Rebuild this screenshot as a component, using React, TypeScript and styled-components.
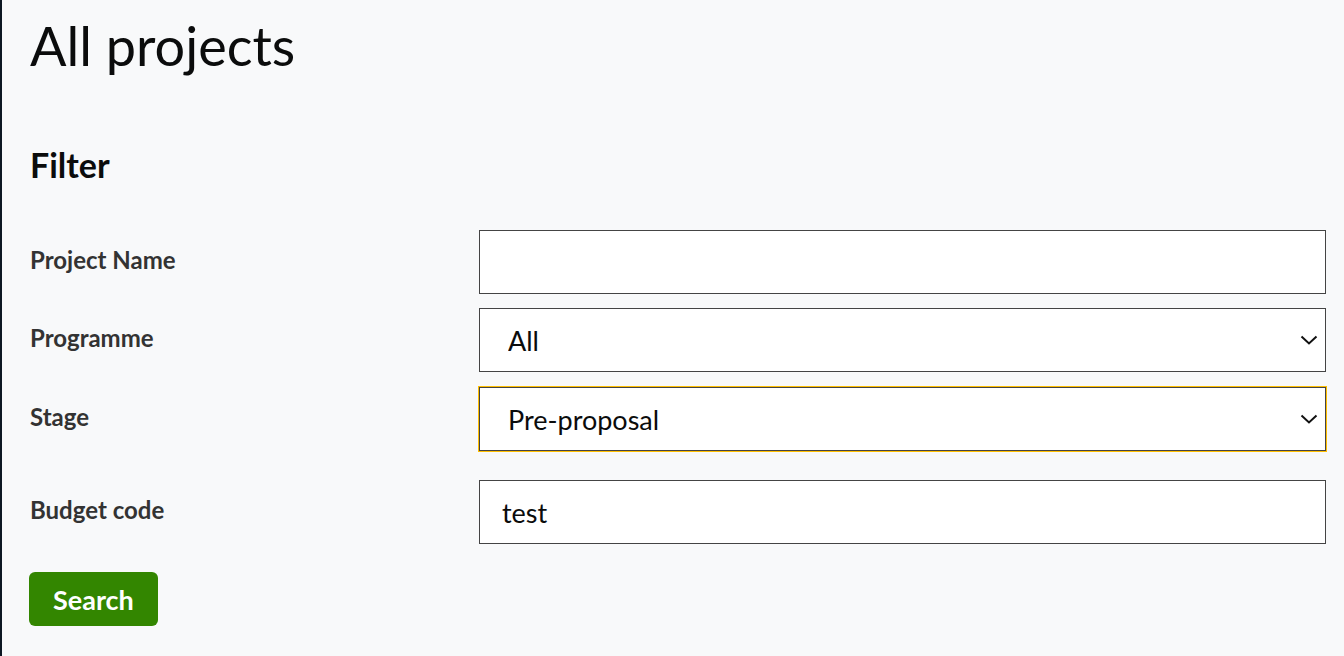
import React, { useState } from "react";
import styled, { createGlobalStyle } from "styled-components";

const GlobalStyle = createGlobalStyle`
  html, body {
    margin: 0;
    padding: 0;
    background: #f8f9fa;
  }
  body {
    font-family: "Source Sans Pro", Lato, "Noto Sans", sans-serif;
    color: #0b0c0c;
  }
`;

const Page = styled.div`
  min-height: 656px;
  box-sizing: border-box;
  border-left: 2px solid #0d1722;
  padding: 0 18px 0 28px;
`;

const Title = styled.h1`
  margin: 0;
  padding-top: 13px;
  font-size: 54px;
  font-weight: 400;
  line-height: 66px;
  color: #0b0c0c;
`;

const SubTitle = styled.h2`
  margin: 66px 0 0;
  font-size: 34px;
  font-weight: 700;
  line-height: 40px;
  color: #0b0c0c;
`;

const Form = styled.form`
  margin-top: 45px;
  display: flex;
  flex-direction: column;
`;

const Row = styled.div<{ $gapTop?: number }>`
  display: grid;
  grid-template-columns: 449px 1fr;
  align-items: center;
  margin-top: ${(p) => p.$gapTop ?? 0}px;
`;

const Label = styled.label`
  font-size: 24px;
  font-weight: 700;
  color: #333;
  padding-bottom: 6px;
`;

const fieldBase = `
  box-sizing: border-box;
  width: 100%;
  height: 64px;
  border: 1px solid #444;
  background: #fff;
  font-family: inherit;
  font-size: 27px;
  color: #0b0c0c;
  border-radius: 0;
  outline: none;
`;

const TextInput = styled.input`
  ${fieldBase}
  padding: 0 22px;
`;

const SelectWrap = styled.div`
  position: relative;
`;

const Select = styled.select<{ $focused?: boolean }>`
  ${fieldBase}
  appearance: none;
  -webkit-appearance: none;
  padding: 0 50px 0 28px;
  box-shadow: ${(p) => (p.$focused ? "0 0 0 1px #ffbf00" : "none")};
`;

const Chevron = styled.svg`
  position: absolute;
  right: 8px;
  top: 50%;
  transform: translateY(-50%);
  pointer-events: none;
`;

const SearchButton = styled.button`
  align-self: flex-start;
  margin-top: 28px;
  margin-left: -1px;
  height: 54px;
  padding: 0 24px;
  background: #338600;
  color: #fff;
  border: none;
  border-radius: 6px;
  font-family: inherit;
  font-size: 27px;
  font-weight: 700;
  cursor: pointer;
`;

const ChevronIcon = () => (
  <Chevron width="18" height="12" viewBox="0 0 18 12">
    <path d="M1.5 2.5 L9 9.5 L16.5 2.5" fill="none" stroke="#111" strokeWidth="2" />
  </Chevron>
);

const App = () => {
  const [name, setName] = useState("");
  const [programme, setProgramme] = useState("All");
  const [stage, setStage] = useState("Pre-proposal");
  const [budget, setBudget] = useState("test");

  return (
    <Page>
      <GlobalStyle />
      <Title>All projects</Title>
      <SubTitle>Filter</SubTitle>
      <Form onSubmit={(e) => e.preventDefault()}>
        <Row>
          <Label htmlFor="name">Project Name</Label>
          <TextInput id="name" value={name} onChange={(e) => setName(e.target.value)} />
        </Row>
        <Row $gapTop={14}>
          <Label htmlFor="programme">Programme</Label>
          <SelectWrap>
            <Select id="programme" value={programme} onChange={(e) => setProgramme(e.target.value)}>
              <option>All</option>
            </Select>
            <ChevronIcon />
          </SelectWrap>
        </Row>
        <Row $gapTop={15}>
          <Label htmlFor="stage">Stage</Label>
          <SelectWrap>
            <Select id="stage" $focused value={stage} onChange={(e) => setStage(e.target.value)}>
              <option>All</option>
              <option>Pre-proposal</option>
            </Select>
            <ChevronIcon />
          </SelectWrap>
        </Row>
        <Row $gapTop={29}>
          <Label htmlFor="budget">Budget code</Label>
          <TextInput id="budget" value={budget} onChange={(e) => setBudget(e.target.value)} />
        </Row>
        <SearchButton type="submit">Search</SearchButton>
      </Form>
    </Page>
  );
};

export default App;
